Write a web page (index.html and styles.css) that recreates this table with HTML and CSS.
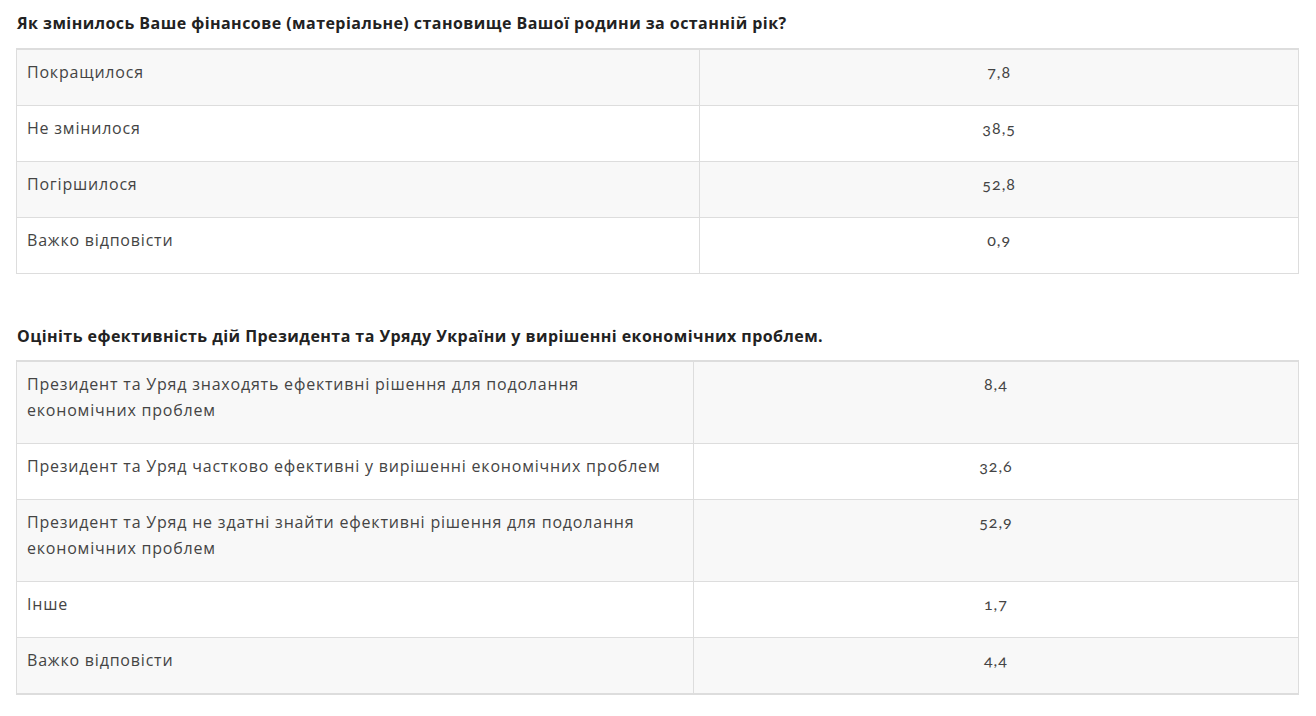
FILE: index.html
```html
<!DOCTYPE html>
<html lang="uk">
<head>
<meta charset="utf-8">
<title>Опитування</title>
<link rel="stylesheet" href="styles.css">
</head>
<body>
<main class="content">
  <section class="survey">
    <h3 class="question">Як змінилось Ваше фінансове (матеріальне) становище Вашої родини за останній рік?</h3>
    <table class="results">
      <tbody>
        <tr><td class="answer">Покращилося</td><td class="value">7,8</td></tr>
        <tr><td class="answer">Не змінилося</td><td class="value">38,5</td></tr>
        <tr><td class="answer">Погіршилося</td><td class="value">52,8</td></tr>
        <tr><td class="answer">Важко відповісти</td><td class="value">0,9</td></tr>
      </tbody>
    </table>
  </section>
  <section class="survey">
    <h3 class="question">Оцініть ефективність дій Президента та Уряду України у вирішенні економічних проблем.</h3>
    <table class="results results-second">
      <tbody>
        <tr><td class="answer">Президент та Уряд знаходять ефективні рішення для подолання економічних проблем</td><td class="value">8,4</td></tr>
        <tr><td class="answer">Президент та Уряд частково ефективні у вирішенні економічних проблем</td><td class="value">32,6</td></tr>
        <tr><td class="answer">Президент та Уряд не здатні знайти ефективні рішення для подолання економічних проблем</td><td class="value">52,9</td></tr>
        <tr><td class="answer">Інше</td><td class="value">1,7</td></tr>
        <tr><td class="answer">Важко відповісти</td><td class="value">4,4</td></tr>
      </tbody>
    </table>
  </section>
</main>
</body>
</html>
```

FILE: styles.css
```css
html, body {
  margin: 0;
  padding: 0;
  background: #fff;
}
body {
  font-family: "Open Sans", Lato, sans-serif;
  color: #444;
}
.content {
  padding: 13px 17px 0 16px;
}
.survey {
  margin-bottom: 52px;
}
.survey:last-child {
  margin-bottom: 0;
}
.question {
  margin: 0 0 15px 1px;
  font-size: 16px;
  font-weight: 700;
  line-height: 20px;
  letter-spacing: 0.45px;
  color: #222;
}
.results-second {
  margin-top: -1px;
}
.results {
  width: 100%;
  border-collapse: collapse;
  border: 1px solid #ddd;
  border-top-width: 2px;
  font-size: 16px;
  line-height: 26px;
}
.results td {
  border: 1px solid #ddd;
  padding: 9px 10px 20px;
  vertical-align: top;
}
.answer {
  width: 53.3%;
  text-align: left;
  letter-spacing: 0.8px;
}
.results tr:nth-child(odd) td {
  background: #f8f8f8;
}
.value {
  text-align: center;
  font-family: Lato, "Open Sans", sans-serif;
  font-variant-numeric: oldstyle-nums;
  letter-spacing: 1px;
}
.results-second .answer {
  width: 52.8%;
}
.results-second {
  border-bottom-width: 2px;
}
```
